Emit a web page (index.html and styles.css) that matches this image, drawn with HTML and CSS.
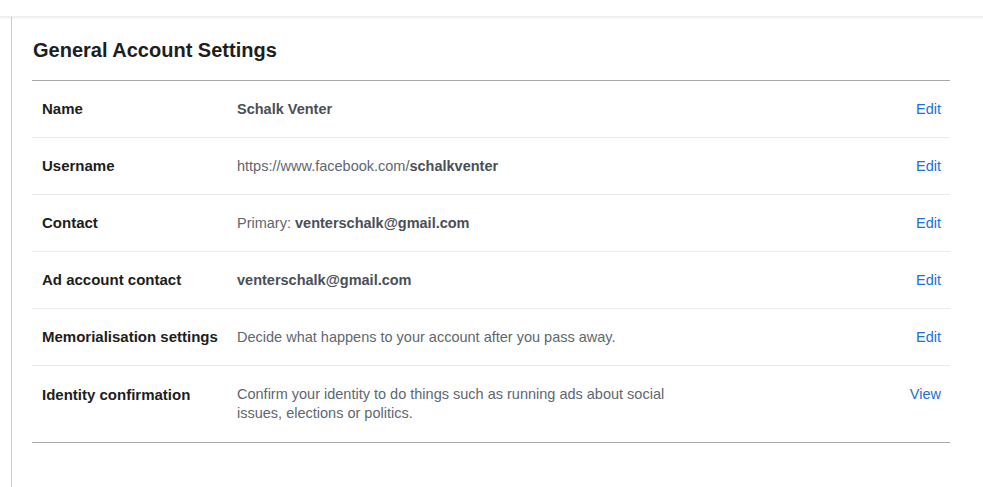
FILE: index.html
```html
<!DOCTYPE html>
<html>
<head>
<meta charset="utf-8">
<link rel="stylesheet" href="styles.css">
</head>
<body>
<div class="topbar"></div>
<div class="main">
  <div class="content">
    <h1 class="title">General Account Settings</h1>
    <div class="list">
      <div class="row">
        <div class="label">Name</div>
        <div class="value"><b>Schalk Venter</b></div>
        <a class="action">Edit</a>
      </div>
      <div class="row">
        <div class="label">Username</div>
        <div class="value">https://www.facebook.com/<b>schalkventer</b></div>
        <a class="action">Edit</a>
      </div>
      <div class="row">
        <div class="label">Contact</div>
        <div class="value">Primary: <b>venterschalk@gmail.com</b></div>
        <a class="action">Edit</a>
      </div>
      <div class="row">
        <div class="label">Ad account contact</div>
        <div class="value"><b>venterschalk@gmail.com</b></div>
        <a class="action">Edit</a>
      </div>
      <div class="row">
        <div class="label">Memorialisation settings</div>
        <div class="value">Decide what happens to your account after you pass away.</div>
        <a class="action">Edit</a>
      </div>
      <div class="row">
        <div class="label">Identity confirmation</div>
        <div class="value narrow">Confirm your identity to do things such as running ads about social issues, elections or politics.</div>
        <a class="action">View</a>
      </div>
    </div>
  </div>
</div>
</body>
</html>
```
FILE: styles.css
```css
html, body {
  margin: 0;
  padding: 0;
  background: #fff;
  font-family: "Liberation Sans", Arial, sans-serif;
  font-size: 14.5px;
  color: #1c1e21;
}
.topbar {
  height: 16px;
  background: #fff;
  box-shadow: 0 1px 2px rgba(0,0,0,0.08);
  border-bottom: 1px solid #eeeeee;
  position: relative;
  z-index: 1;
}
.main {
  margin-left: 11px;
  border-left: 1px solid #cccccc;
  min-height: 470px;
  padding-left: 20px;
}
.content {
  width: 918px;
  padding-top: 21px;
}
.title {
  margin: 0;
  font-size: 20px;
  line-height: 24px;
  font-weight: bold;
  color: #1c1e21;
  padding-left: 1px;
  padding-bottom: 18px;
  border-bottom: 1px solid #aaaaaa;
}
.list {
  border-bottom: 1px solid #aaaaaa;
}
.row {
  display: flex;
  align-items: flex-start;
  padding: 19px 9px 19px 10px;
  line-height: 18px;
  border-bottom: 1px solid #e9ebee;
}
.row:last-child {
  border-bottom: none;
  padding-bottom: 19px;
  line-height: 19px;
}
.label {
  width: 195px;
  flex: none;
  font-weight: bold;
  font-size: 15px;
  color: #1c1e21;
}
.value {
  flex: 1;
  color: #606770;
}
.value b {
  color: #4b4f56;
}
.value.narrow {
  flex: none;
  width: 445px;
  margin-right: auto;
}
.action {
  color: #216fdb;
  cursor: pointer;
}
```
